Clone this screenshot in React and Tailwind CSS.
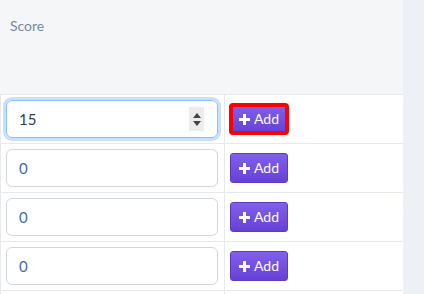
export default function App() {
  const rows = [
    { value: "15", focused: true },
    { value: "0" },
    { value: "0" },
    { value: "0" },
  ];

  return (
    <div className="flex h-[294px] w-[424px] overflow-hidden bg-[#edf0f4] font-['Lato','Open_Sans',sans-serif]">
      <div className="w-[403px] shrink-0">
        {/* Header */}
        <div className="h-[95px] border-b border-[#e6e9ee] bg-[#f4f6f8] px-[10px] pt-[13px]">
          <span className="text-[14px] text-[#7889a0]">Score</span>
        </div>

        {/* Rows */}
        {rows.map((row, i) => (
          <div
            key={i}
            className="grid h-[49px] grid-cols-[224px_1fr] border-b border-l border-[#e6e9ee] bg-white"
          >
            <div className="flex items-center border-r border-[#e6e9ee] pl-[5px]">
              <div
                className={
                  row.focused
                    ? "flex h-[38px] w-[212px] items-center justify-between rounded-[6px] border border-[#8ec0f7] pl-[12px] pr-[13px] shadow-[0_0_0_3px_#c8e0fc]"
                    : "flex h-[38px] w-[212px] items-center rounded-[6px] border border-[#d3d7dd] pl-[12px]"
                }
              >
                <span
                  className={
                    row.focused
                      ? "text-[15px] text-[#2c3e55]"
                      : "text-[15px] text-[#3f6da6]"
                  }
                >
                  {row.value}
                </span>
                {row.focused && (
                  <div className="flex h-[24px] w-[15px] flex-col items-center justify-center gap-[3px] bg-[#ececec]">
                    <svg width="8" height="5" viewBox="0 0 8 5">
                      <path d="M4 0L8 5H0z" fill="#444" />
                    </svg>
                    <svg width="8" height="5" viewBox="0 0 8 5">
                      <path d="M0 0H8L4 5z" fill="#444" />
                    </svg>
                  </div>
                )}
              </div>
            </div>
            <div className="flex items-center pl-[5px]">
              <button
                className={
                  "flex h-[30px] w-[58px] items-center justify-center gap-[4px] rounded-[3px] border border-[#5a3bc2] bg-gradient-to-b from-[#8060ec] to-[#6640d6] text-white" +
                  (row.focused ? " outline-4 outline-[#ff0000] -outline-offset-3" : "")
                }
              >
                <svg width="11" height="11" viewBox="0 0 11 11">
                  <path d="M4 0h3v4h4v3H7v4H4V7H0V4h4z" fill="#fff" />
                </svg>
                <span className="text-[14px] leading-none">Add</span>
              </button>
            </div>
          </div>
        ))}

        {/* next row, cut off by the window */}
        <div className="grid h-[49px] grid-cols-[224px_1fr] border-l border-[#e6e9ee] bg-white">
          <div className="border-r border-[#e6e9ee]" />
          <div />
        </div>
      </div>
    </div>
  );
}
